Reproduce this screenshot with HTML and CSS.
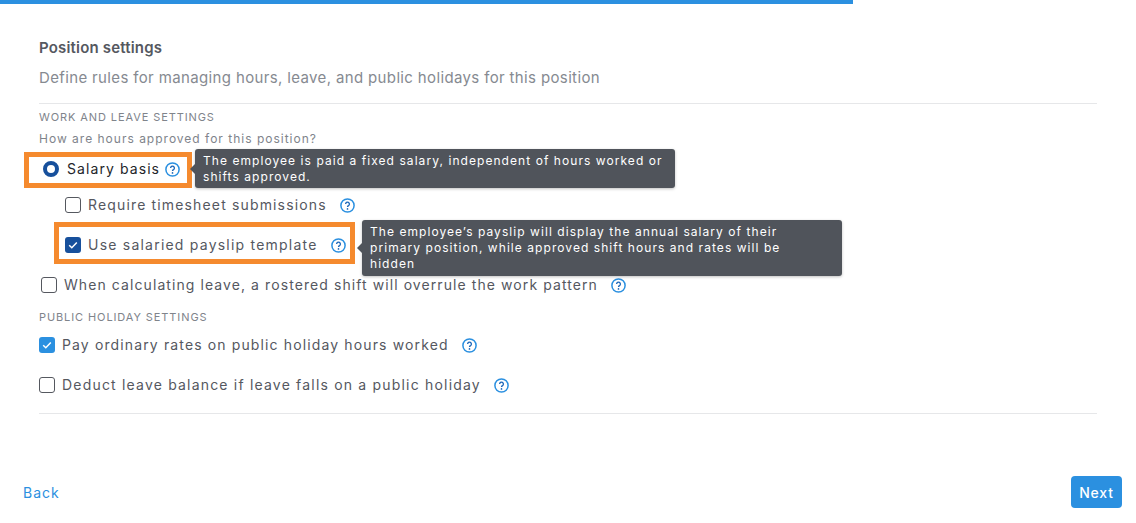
FILE: index.html
```html
<!DOCTYPE html>
<html lang="en">
<head>
  <meta charset="UTF-8" />
  <title>Position settings</title>
  <link rel="stylesheet" href="styles.css">
</head>
<body>
  <svg class="defs" width="0" height="0" aria-hidden="true">
    <symbol id="help" viewBox="0 0 15 15">
      <circle cx="7.5" cy="7.5" r="6.6" fill="none" stroke="currentColor" stroke-width="1.5"/>
      <path d="M5.6 6a1.9 1.9 0 1 1 2.9 1.6c-.7.4-1 .7-1 1.4" fill="none" stroke="#1c66b8" stroke-width="1.3"/>
      <circle cx="7.5" cy="10.9" r=".85" fill="#1c66b8"/>
    </symbol>
    <symbol id="tick" viewBox="0 0 16 16">
      <path d="M4.2 8.3l2.6 2.5 5-5.3" fill="none" stroke="#fff" stroke-width="1.5"/>
    </symbol>
  </svg>

  <div class="progress"></div>

  <main class="content">
    <h2 class="title">Position settings</h2>
    <p class="subtitle">Define rules for managing hours, leave, and public holidays for this position</p>
    <hr class="rule">

    <div class="label label-first">WORK AND LEAVE SETTINGS</div>
    <div class="question">How are hours approved for this position?</div>

    <div class="highlight salary">
      <span class="radio"></span>
      <span class="salary-text">Salary basis</span>
      <svg class="help help-close"><use href="#help"/></svg>
      <div class="tooltip tooltip-salary">The employee is paid a fixed salary, independent of hours worked or shifts approved.</div>
    </div>

    <div class="row row-require indent">
      <span class="check"></span>
      <span class="row-text">Require timesheet submissions</span>
      <svg class="help"><use href="#help"/></svg>
    </div>

    <div class="highlight payslip">
      <span class="check check-dark"><svg><use href="#tick"/></svg></span>
      <span class="row-text">Use salaried payslip template</span>
      <svg class="help"><use href="#help"/></svg>
      <div class="tooltip tooltip-payslip">The employee’s payslip will display the annual salary of their primary position, while approved shift hours and rates will be hidden</div>
    </div>

    <div class="row row-when">
      <span class="check"></span>
      <span class="row-text">When calculating leave, a rostered shift will overrule the work pattern</span>
      <svg class="help"><use href="#help"/></svg>
    </div>

    <div class="label label-public">PUBLIC HOLIDAY SETTINGS</div>

    <div class="row row-pay">
      <span class="check check-blue"><svg><use href="#tick"/></svg></span>
      <span class="row-text">Pay ordinary rates on public holiday hours worked</span>
      <svg class="help"><use href="#help"/></svg>
    </div>

    <div class="row row-deduct">
      <span class="check"></span>
      <span class="row-text">Deduct leave balance if leave falls on a public holiday</span>
      <svg class="help"><use href="#help"/></svg>
    </div>

    <hr class="rule rule-bottom">
  </main>

  <footer class="footer">
    <a class="back">Back</a>
    <button class="next">Next</button>
  </footer>
</body>
</html>
```

FILE: styles.css
```css
* {
  box-sizing: border-box;
}
body {
  margin: 0;
  background: #fff;
  font-family: "Inter", "Open Sans", sans-serif;
  color: #55585f;
  overflow: hidden;
}
.defs {
  display: block;
  height: 0;
}
.progress {
  width: 853px;
  height: 4px;
  background: #2b90e0;
}
.content {
  padding: 34px 39px 0;
}
.title {
  margin: 0;
  font-size: 15px;
  line-height: 20px;
  font-weight: 600;
  letter-spacing: 0.18px;
  color: #55585f;
}
.subtitle {
  margin: 10px 0 0;
  font-size: 15px;
  line-height: 20px;
  letter-spacing: 0.36px;
  color: #868a91;
}
.rule {
  margin: 15px 0 0;
  border: 0;
  border-top: 1px solid #e6e7e9;
}
.rule-bottom {
  margin-top: 18px;
}
.label {
  font-size: 11px;
  line-height: 16px;
  letter-spacing: 0.9px;
  color: #80848b;
}
.label-first {
  margin-top: 5px;
}
.label-public {
  margin-top: 14px;
}
.question {
  margin-top: 6px;
  font-size: 12px;
  line-height: 16px;
  letter-spacing: 1px;
  color: #80848b;
}
.row {
  display: flex;
  align-items: center;
  height: 20px;
  font-size: 14px;
  letter-spacing: 1.15px;
}
.indent {
  margin-left: 26px;
}
.row-require {
  margin-top: 7px;
}
.row-when {
  margin-top: 11px;
  margin-left: 2px;
  letter-spacing: 1.08px;
}
.row-pay {
  margin-top: 10px;
  letter-spacing: 1.13px;
}
.row-deduct {
  margin-top: 20px;
  letter-spacing: 1.19px;
}
.row-text {
  margin-left: 7px;
  padding-bottom: 2px;
}
.highlight {
  position: relative;
  display: flex;
  align-items: center;
  border: 5px solid #f58a2e;
  font-size: 14px;
  letter-spacing: 1.22px;
}
.salary {
  width: 168px;
  height: 36px;
  margin: 5px 0 0 -15px;
  padding: 0 0 2px 14px;
  letter-spacing: 1.08px;
}
.salary-text {
  margin-left: 8px;
  padding-bottom: 1px;
  color: #23252a;
}
.payslip {
  width: 301px;
  height: 42px;
  margin: 7px 0 0 15px;
  padding: 4px 0 0 6px;
}
.radio {
  flex: none;
  width: 16px;
  height: 16px;
  border: 4.5px solid #17509c;
  border-radius: 50%;
}
.check {
  flex: none;
  display: block;
  width: 16px;
  height: 16px;
  border: 1px solid #55585f;
  border-radius: 3px;
}
.check svg {
  display: block;
  width: 16px;
  height: 16px;
}
.check-dark {
  border: 0;
  background: #17509c;
}
.check-blue {
  border: 0;
  background: #2b90e0;
}
.help {
  flex: none;
  width: 15px;
  height: 15px;
  margin-left: 13px;
  color: #2b90e0;
}
.help-close {
  margin-left: 5px;
}
.tooltip {
  position: absolute;
  width: 480px;
  padding: 4px 8px;
  border-radius: 3px;
  background: #50545b;
  color: #fff;
  font-size: 12px;
  line-height: 16px;
  letter-spacing: 1.06px;
  box-shadow: 0 1px 3px rgba(0, 0, 0, 0.25);
}
.tooltip::before {
  content: "";
  position: absolute;
  left: -5px;
  top: 50%;
  margin-top: -5px;
  border-top: 5px solid transparent;
  border-bottom: 5px solid transparent;
  border-right: 5px solid #50545b;
}
.tooltip-salary {
  left: 166px;
  top: -8px;
  height: 39px;
}
.tooltip-payslip {
  left: 303px;
  top: -7px;
  height: 56px;
  padding-right: 24px;
}
.footer {
  display: flex;
  align-items: center;
  justify-content: space-between;
  height: 32px;
  margin-top: 62px;
  padding: 0 14px 0 23px;
}
.back {
  font-size: 14px;
  letter-spacing: 1px;
  color: #2b90e0;
}
.next {
  width: 51px;
  height: 32px;
  padding: 0;
  border: 0;
  border-radius: 4px;
  background: #2b90e0;
  color: #fff;
  font-family: inherit;
  font-size: 14px;
  font-weight: 500;
  letter-spacing: 0.8px;
}
```
